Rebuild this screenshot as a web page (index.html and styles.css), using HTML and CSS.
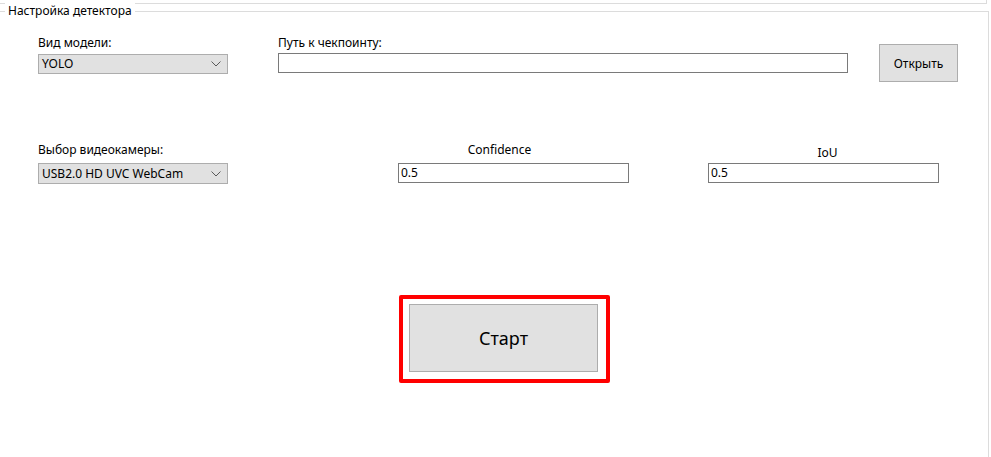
FILE: index.html
```html
<!DOCTYPE html>
<html lang="ru">
<head>
<meta charset="utf-8">
<link rel="stylesheet" href="styles.css">
</head>
<body>
<div class="topframe"></div>
<div class="group">
  <span class="group-title">Настройка детектора</span>
  <div class="row row1">
    <div class="field f-model">
      <label class="lbl">Вид модели:</label>
      <div class="combo"><span>YOLO</span>
        <svg class="chev" width="10" height="6" viewBox="0 0 10 6"><path d="M0.5 0.5 L5 5 L9.5 0.5" fill="none" stroke="#5a5a5a" stroke-width="1"/></svg>
      </div>
    </div>
    <div class="field f-path">
      <label class="lbl">Путь к чекпоинту:</label>
      <div class="input input-path"></div>
    </div>
    <div class="btn btn-open">Открыть</div>
  </div>
  <div class="row row2">
    <div class="field f-cam">
      <label class="lbl lbl-cam">Выбор видеокамеры:</label>
      <div class="combo combo-cam"><span>USB2.0 HD UVC WebCam</span>
        <svg class="chev" width="10" height="6" viewBox="0 0 10 6"><path d="M0.5 0.5 L5 5 L9.5 0.5" fill="none" stroke="#5a5a5a" stroke-width="1"/></svg>
      </div>
    </div>
    <div class="field f-conf">
      <label class="lbl lbl-conf">Confidence</label>
      <div class="input">0.5</div>
    </div>
    <div class="field f-iou">
      <label class="lbl lbl-iou">IoU</label>
      <div class="input">0.5</div>
    </div>
  </div>
  <div class="start-wrap">
    <div class="start-frame">
      <div class="btn btn-start">Старт</div>
    </div>
  </div>
</div>
</body>
</html>
```
FILE: styles.css
```css
html, body {
  margin: 0;
  padding: 0;
  background: #ffffff;
}
body {
  font-family: "Noto Sans", "Open Sans", "DejaVu Sans", sans-serif;
  font-size: 12px;
  color: #000000;
  width: 991px;
  height: 457px;
  overflow: hidden;
}
.topframe {
  height: 3px;
  margin-right: 4px;
  border-right: 1px solid #dcdcdc;
  border-bottom: 1px solid #dcdcdc;
}
.group {
  position: relative;
  margin-top: 7px;
  margin-right: 2px;
  height: 446px;
  border-top: 1px solid #dcdcdc;
  border-right: 1px solid #dcdcdc;
  padding-top: 23px;
  box-sizing: border-box;
}
.group-title {
  position: absolute;
  left: 5px;
  top: -10px;
  padding: 0 3px;
  background: #ffffff;
  line-height: 18px;
}
.row {
  display: flex;
  align-items: flex-start;
}
.field {
  display: flex;
  flex-direction: column;
}
.lbl {
  display: block;
  height: 16px;
  line-height: 16px;
  white-space: nowrap;
}
.combo {
  box-sizing: border-box;
  height: 20px;
  background: #e1e1e1;
  border: 1px solid #adadad;
  display: flex;
  align-items: center;
  justify-content: space-between;
  padding: 0 6px 0 3px;
  line-height: 18px;
}
.chev { display: block; }
.f-model {
  margin-left: 38px;
  width: 190px;
}
.f-model .lbl { margin-bottom: 3px; }
.f-path {
  margin-left: 50px;
  width: 570px;
}
.f-path .lbl { margin-bottom: 2px; }
.input {
  box-sizing: border-box;
  height: 20px;
  border: 1px solid #7a7a7a;
  background: #ffffff;
  padding: 0 2px;
  line-height: 18px;
}
.btn {
  box-sizing: border-box;
  background: #e1e1e1;
  border: 1px solid #adadad;
  display: flex;
  align-items: center;
  justify-content: center;
}
.btn-open {
  margin-left: 31px;
  margin-top: 9px;
  width: 79px;
  height: 38px;
}
.row2 {
  margin-top: 60px;
}
.f-cam {
  margin-left: 38px;
  width: 190px;
}
.lbl-cam { margin-bottom: 5px; }
.combo-cam { height: 21px; }
.f-conf {
  margin-left: 170px;
  width: 231px;
}
.lbl-conf {
  text-align: center;
  padding-right: 28px;
  margin-bottom: 5px;
}
.f-iou {
  margin-left: 79px;
  width: 231px;
}
.lbl-iou {
  text-align: center;
  padding-left: 8px;
  margin-top: 3px;
  margin-bottom: 2px;
}
.start-wrap {
  margin-top: 111px;
  padding-left: 399px;
}
.start-frame {
  display: inline-block;
  border: 4px solid #ff0000;
  border-radius: 2px;
  padding: 5px 8px 7px 6px;
}
.btn-start {
  width: 189px;
  height: 68px;
  font-size: 18px;
}
```
